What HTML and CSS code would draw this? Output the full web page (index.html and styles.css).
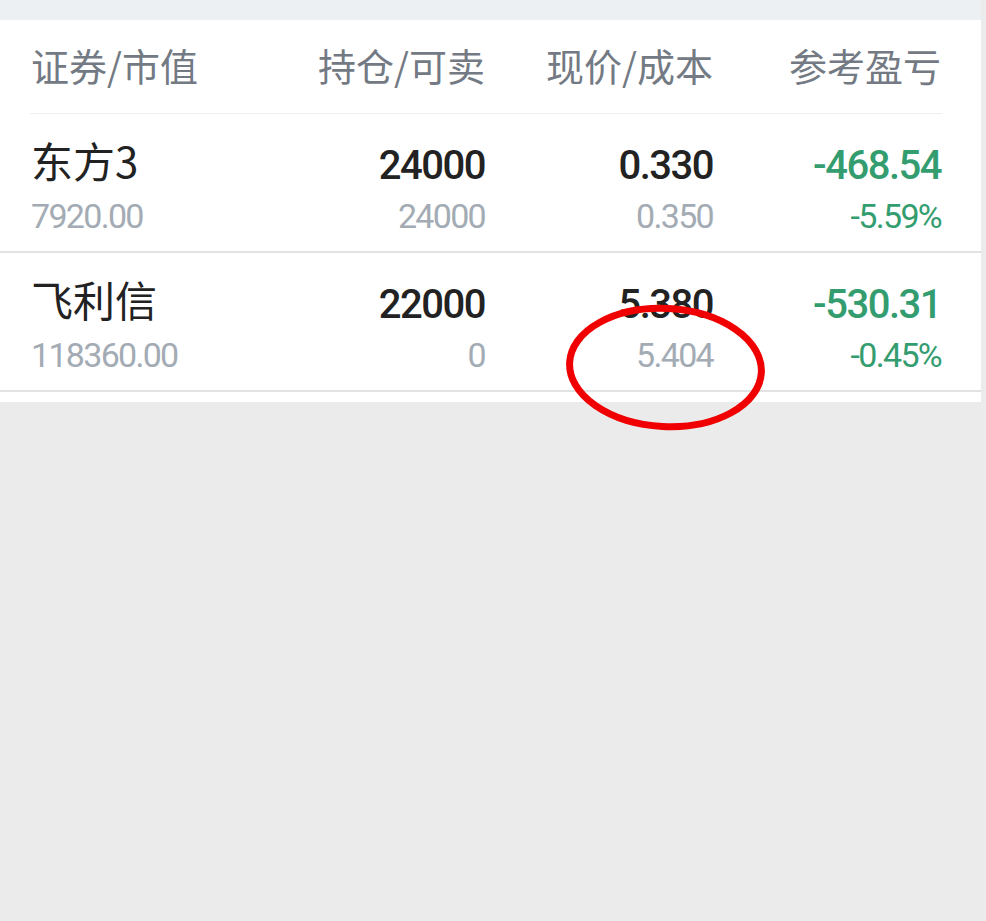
FILE: index.html
```html
<!DOCTYPE html>
<html lang="zh-CN">
<head>
<meta charset="utf-8">
<title>持仓</title>
<link rel="stylesheet" href="styles.css">
</head>
<body>
<div class="panel">
  <div class="topband"></div>
  <div class="card">
    <div class="thead">
      <div class="th left">证券/市值</div>
      <div class="th">持仓/可卖</div>
      <div class="th">现价/成本</div>
      <div class="th">参考盈亏</div>
    </div>
    <div class="row">
      <div class="cell left">
        <div class="name">东方3</div>
        <div class="sub">7920.00</div>
      </div>
      <div class="cell">
        <div class="num">24000</div>
        <div class="sub">24000</div>
      </div>
      <div class="cell">
        <div class="num">0.330</div>
        <div class="sub">0.350</div>
      </div>
      <div class="cell">
        <div class="num green">-468.54</div>
        <div class="sub green">-5.59%</div>
      </div>
    </div>
    <div class="row">
      <div class="cell left">
        <div class="name">飞利信</div>
        <div class="sub">118360.00</div>
      </div>
      <div class="cell">
        <div class="num">22000</div>
        <div class="sub">0</div>
      </div>
      <div class="cell">
        <div class="num">5.380</div>
        <div class="sub">5.404</div>
      </div>
      <div class="cell">
        <div class="num green">-530.31</div>
        <div class="sub green">-0.45%</div>
      </div>
    </div>
  </div>
</div>
<svg class="mark" width="212" height="140" viewBox="0 0 212 140">
  <ellipse cx="105.5" cy="69.5" rx="96" ry="59" fill="none" stroke="#f00000" stroke-width="7" transform="rotate(3 105.5 69.5)"/>
</svg>
</body>
</html>
```
FILE: styles.css
```css
html, body {
  margin: 0;
  padding: 0;
}
body {
  background: #ebebeb;
  width: 986px;
  height: 921px;
  overflow: hidden;
  position: relative;
}
.panel {
  width: 981px;
}
.topband {
  height: 20px;
  background: #edf0f3;
}
.card {
  background: #ffffff;
  padding-bottom: 10px;
}
.thead {
  display: grid;
  grid-template-columns: 226px 228px 228px 228px;
  margin: 0 39px 0 30px;
  padding-left: 1px;
  height: 94px;
  border-bottom: 1px solid #efefef;
  align-items: center;
  box-sizing: border-box;
}
.th {
  font-family: "Noto Sans CJK SC", sans-serif;
  font-size: 38px;
  color: #737a83;
  text-align: right;
  line-height: 48px;
  padding-bottom: 4px;
}
.left {
  text-align: left;
}
.row {
  display: grid;
  grid-template-columns: 226px 228px 228px 228px;
  padding: 25px 40px 0 31px;
  height: 139px;
  box-sizing: border-box;
  border-bottom: 2px solid #e2e2e2;
}
.cell {
  display: flex;
  flex-direction: column;
  align-items: flex-end;
}
.cell.left {
  align-items: flex-start;
}
.name {
  font-family: "Noto Sans CJK SC", sans-serif;
  font-size: 42px;
  color: #222222;
  line-height: 48px;
  height: 48px;
  margin-top: -3px;
}
.num {
  font-family: Roboto, "Noto Sans", sans-serif;
  font-weight: 500;
  font-size: 40px;
  letter-spacing: -1.5px;
  color: #222222;
  line-height: 48px;
  height: 48px;
  margin-top: 3px;
}
.sub {
  font-family: Roboto, "Noto Sans", sans-serif;
  font-size: 34px;
  letter-spacing: -1.7px;
  color: #a3abb4;
  line-height: 48px;
  margin-top: 2px;
}
.name + .sub {
  margin-top: 8px;
}
.green {
  color: #349d70;
}
.mark {
  position: absolute;
  left: 560px;
  top: 298px;
}
```
